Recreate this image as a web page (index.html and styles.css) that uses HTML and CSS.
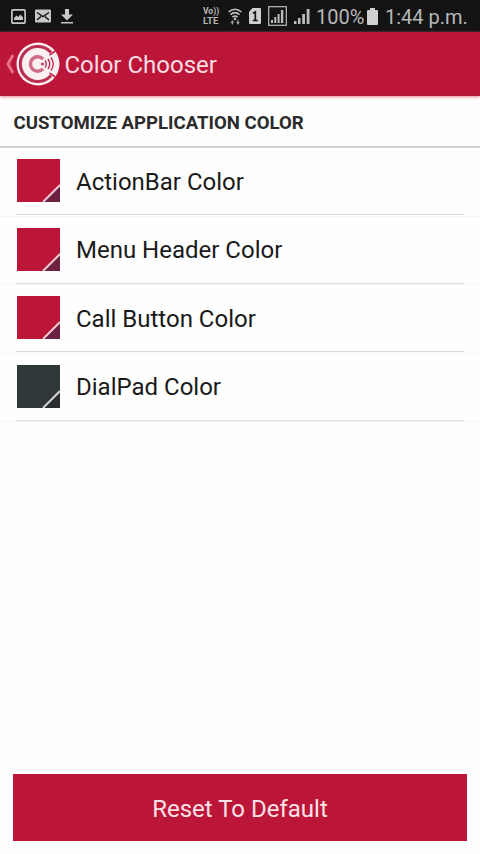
FILE: index.html
```html
<!DOCTYPE html>
<html lang="en">
<head>
<meta charset="utf-8">
<title>Color Chooser</title>
<link rel="stylesheet" href="styles.css">
</head>
<body>
<div class="screen">
  <div class="status">
    <div class="status-left">
      <svg width="15" height="15" viewBox="0 0 15 15"><rect x=".9" y=".9" width="13.2" height="13.2" rx="1" fill="none" stroke="#c8c8c8" stroke-width="1.700"/><path d="M3 11V9l2.500-2.500L7.200 8l2.300-2.500L12 8.500V11z" fill="#c8c8c8"/></svg>
      <svg width="16" height="14" viewBox="0 0 16 14"><rect y=".5" width="16" height="13" rx="1" fill="#c8c8c8"/><path d="M2 3.500l6 4 6-4M2 11l4-3.500M14 11l-4-3.500" fill="none" stroke="#151515" stroke-width="1.500"/></svg>
      <svg width="12" height="15" viewBox="0 0 12 15"><path d="M4 0h4v5.500h4l-6 6-6-6h4zM0 13h12v1.600H0z" fill="#c8c8c8"/></svg>
    </div>
    <div class="status-right">
      <div class="volte"><span class="vo">Vo))</span><span class="lte">LTE</span></div>
      <svg class="wifi" width="14" height="17" viewBox="0 0 14 17"><g fill="none" stroke="#c0c0c0" stroke-width="1.600"><path d="M.5 4Q7-1.500 13.500 4M2.500 6.700Q7 2.700 11.500 6.700M4.500 9.200Q7 7 9.500 9.200"/></g><circle cx="7" cy="11" r="1.300" fill="#c0c0c0"/><path d="M2.500 14.800L4.300 12l1.800 2.800zM3.700 14h1.200v2.500H3.700zM8.200 14.200h3.600L10 16.800zM9.400 12h1.200v3H9.400z" fill="#aaa"/></svg>
      <svg class="sim" width="12" height="16" viewBox="0 0 12 16"><path d="M3.500 0H11a1 1 0 0 1 1 1v14a1 1 0 0 1-1 1H1a1 1 0 0 1-1-1V4z" fill="#cfcfcf"/><path d="M3.800 5.300L6.300 4v8.800M3.800 12.500h5" fill="none" stroke="#151515" stroke-width="1.700"/></svg>
      <svg class="signal-box" width="19" height="20" viewBox="0 0 19 20"><rect x=".7" y=".7" width="17.600" height="18.600" fill="none" stroke="#bcbcbc" stroke-width="1.200"/><path d="M3 14h2v3H3zM6.300 11h2v6h-2zM9.600 8h2v9h-2zM12.900 4h2.400v13h-2.400z" fill="#bcbcbc"/></svg>
      <svg class="signal" width="16" height="16" viewBox="0 0 16 16"><path d="M0 13h2.500v3H0zM4 10h2.500v6H4zM8.200 6h2.800v10H8.200zM12.700 1h2.800v15h-2.800z" fill="#bcbcbc"/></svg>
      <span class="status-text percent">100%</span>
      <svg class="battery" width="11" height="17" viewBox="0 0 11 17"><path d="M3 0h5v2h2a1 1 0 0 1 1 1v13a1 1 0 0 1-1 1H1a1 1 0 0 1-1-1V3a1 1 0 0 1 1-1h2z" fill="#d0d0d0"/></svg>
      <span class="status-text clock">1:44 p.m.</span>
    </div>
  </div>
  <header class="action-bar">
    <svg class="back" width="9" height="20" viewBox="0 0 9 20"><path d="M8 1L3 10l5 9" fill="none" stroke="#e8708b" stroke-width="3"/></svg>
    <svg class="logo" width="44" height="44" viewBox="0 0 44 44">
      <circle cx="22" cy="22" r="21.500" fill="#fdf0f2"/>
      <path d="M35 10.500A17.500 17.500 0 1 0 35 33.500" fill="none" stroke="#b93051" stroke-width="3.200"/>
      <path d="M33.500 13l6-4M33.500 31l6 4" fill="none" stroke="#b93051" stroke-width="1.700"/>
      <path d="M27 17.200A7.200 7.200 0 1 0 27 26.800" fill="none" stroke="#cf6d88" stroke-width="3.400"/>
      <circle cx="26.500" cy="22" r="1.500" fill="#b93051"/>
      <path d="M29 18.500q2.500 3.500 0 7M32 17q3.500 5 0 10M35 15.500q4.500 6.500 0 13" fill="none" stroke="#b93051" stroke-width="1.400"/>
    </svg>
    <h1 class="title">Color Chooser</h1>
  </header>
  <h2 class="section">CUSTOMIZE APPLICATION COLOR</h2>
  <ul class="list">
    <li class="row"><svg class="swatch" viewBox="0 0 43 43"><path d="M0 0h43v43H0z" fill="#bb1638"/><path d="M26 43L43 26v17z" fill="#6c2140"/><path d="M26 43L43 26" stroke="#f1cbd4" stroke-width="2"/></svg><span class="label">ActionBar Color</span></li>
    <li class="row"><svg class="swatch" viewBox="0 0 43 43"><path d="M0 0h43v43H0z" fill="#bb1638"/><path d="M26 43L43 26v17z" fill="#6c2140"/><path d="M26 43L43 26" stroke="#f1cbd4" stroke-width="2"/></svg><span class="label">Menu Header Color</span></li>
    <li class="row"><svg class="swatch" viewBox="0 0 43 43"><path d="M0 0h43v43H0z" fill="#bb1638"/><path d="M26 43L43 26v17z" fill="#6c2140"/><path d="M26 43L43 26" stroke="#f1cbd4" stroke-width="2"/></svg><span class="label">Call Button Color</span></li>
    <li class="row"><svg class="swatch" viewBox="0 0 43 43"><path d="M0 0h43v43H0z" fill="#303739"/><path d="M26 43L43 26v17z" fill="#292d2f"/><path d="M26 43L43 26" stroke="#d4d7d8" stroke-width="2"/></svg><span class="label">DialPad Color</span></li>
  </ul>
  <button class="reset">Reset To Default</button>
</div>
</body>
</html>
```
FILE: styles.css
```css
* { box-sizing: border-box; }
body { margin: 0; background: #fefefe; font-family: Roboto, sans-serif; }
svg { display: block; flex: none; }
.screen { width: 480px; height: 854px; display: flex; flex-direction: column; overflow: hidden; }
.status { height: 32px; flex: none; background: #131313; display: flex; justify-content: space-between; align-items: center; padding: 0 13px 0 11px; color: #b8b8b8; }
.status-left { display: flex; align-items: center; gap: 9px; }
.status-left svg:last-child { margin-left: 1px; }
.status-right { display: flex; align-items: center; }
.volte { display: flex; flex-direction: column; width: 17px; font-weight: 700; white-space: nowrap; }
.vo { font-size: 8.500px; line-height: 9px; }
.lte { font-size: 9.500px; line-height: 10px; }
.wifi { margin-left: 8px; }
.sim { margin-left: 7px; }
.signal-box { margin-left: 7px; }
.signal { margin-left: 7px; }
.status-text { font-size: 20px; line-height: 32px; padding-top: 1px; white-space: nowrap; }
.percent { margin-left: 6px; width: 48px; }
.battery { margin-left: 3px; }
.clock { margin-left: 7px; width: 82px; }
.action-bar { height: 64px; flex: none; background: linear-gradient(#bb1638 61px, #b01c3b); box-shadow: 0 1px 3px #e8889b; display: flex; align-items: center; padding-left: 5px; }
.logo { margin-left: 2px; }
.title { margin: 2px 0 0 4.500px; font-size: 24px; font-weight: 400; color: #fbdde3; }
.section { margin: 0; height: 52px; flex: none; padding: 1px 13.500px 0; background: linear-gradient(#cccccc, #d6d6d6) 0 50px / 480px 2px no-repeat; font-size: 18.600px; line-height: 53px; font-weight: 700; color: #2b2b2b; white-space: nowrap; }
.list { margin: 0; padding: 0; list-style: none; }
.row { height: 68.500px; display: flex; align-items: center; padding: 0 17px 2px; border-bottom: 1px solid #f5f5f5; background: linear-gradient(#dcdcdc, #dcdcdc) 16px 66px / 448px 1px no-repeat; }
.swatch { width: 43px; height: 43px; }
.label { margin-left: 16px; padding-top: 2px; font-size: 24px; color: #1a1a1a; white-space: nowrap; }
.reset { margin: auto 13px 13px; height: 67px; border: 0; padding: 2px 0 0; background: #bb1638; color: #fce1e7; font: 400 24px Roboto, sans-serif; }
```
